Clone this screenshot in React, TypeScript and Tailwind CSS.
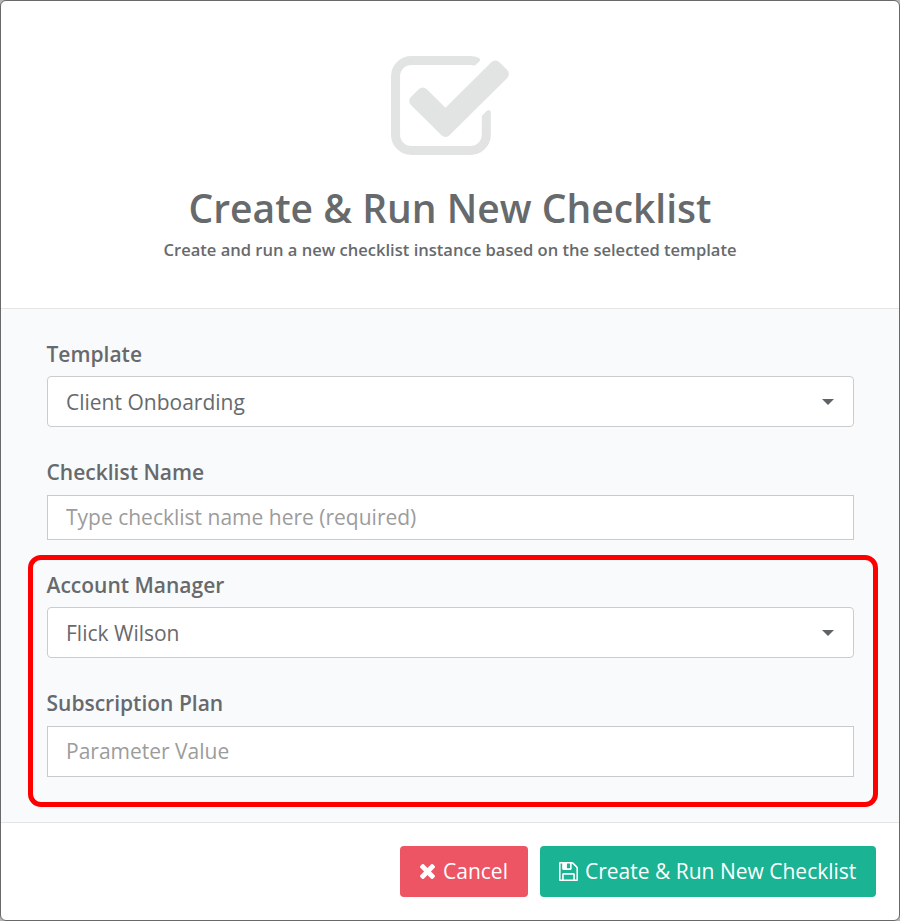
import React from 'react';

interface FieldProps {
  label: string;
  children: React.ReactNode;
}

const Field: React.FC<FieldProps> = ({ label, children }) => (
  <label className="block">
    <span className="-ml-[0.5px] block h-[32px] leading-[30px] mb-[5px] font-semibold text-[#676a6c]">{label}</span>
    {children}
  </label>
);

// Closed dropdown showing the current value
const SelectBox = ({ value }: { value: string }) => (
  <button
    type="button"
    className="flex w-full h-[51px] items-center justify-between rounded-[4px] border border-[#cccccc] bg-white pl-[18px] pr-[19px] text-left text-[#676a6c]"
  >
    <span>{value}</span>
    <svg width="12" height="6" viewBox="0 0 12 6" fill="#606366">
      <path d="M0 0h12L6 6z" />
    </svg>
  </button>
);

const CheckSquareIcon = () => (
  <svg width="118" height="99" viewBox="64 128 1664 1408" preserveAspectRatio="none" fill="#e2e4e3">
    <path d="M1472 930v318q0 119-84.5 203.5t-203.5 84.5h-832q-119 0-203.5-84.5t-84.5-203.5v-832q0-119 84.5-203.5t203.5-84.5h832q63 0 117 25 15 7 18 23 3 17-9 29l-49 49q-10 10-23 10-3 0-9-2-23-6-45-6h-832q-66 0-113 47t-47 113v832q0 66 47 113t113 47h832q66 0 113-47t47-113v-254q0-13 9-22l64-64q10-10 23-10 6 0 12 3 20 8 20 29zm231-489l-814 814q-24 24-57 24t-57-24l-430-430q-24-24-24-57t24-57l110-110q24-24 57-24t57 24l263 263 647-647q24-24 57-24t57 24l110 110q24 24 24 57t-24 57z" />
  </svg>
);

const TimesIcon = () => (
  <svg width="15" height="15" viewBox="302 366 1188 1188" fill="currentColor">
    <path d="M1490 1322q0 40-28 68l-136 136q-28 28-68 28t-68-28l-294-294-294 294q-28 28-68 28t-68-28l-136-136q-28-28-28-68t28-68l294-294-294-294q-28-28-28-68t28-68l136-136q28-28 68-28t68 28l294 294 294-294q28-28 68-28t68 28l136 136q28 28 28 68t-28 68l-294 294 294 294q28 28 28 68z" />
  </svg>
);

const SaveIcon = () => (
  <svg width="19" height="19" viewBox="128 128 1536 1536" fill="currentColor">
    <path d="M512 1536h768v-384h-768v384zm896 0h128v-896q0-14-10-38.5t-20-34.5l-281-281q-10-10-34-20t-39-10v416q0 40-28 68t-68 28h-576q-40 0-68-28t-28-68v-416h-128v1280h128v-416q0-40 28-68t68-28h832q40 0 68 28t28 68v416zm-384-928v-320q0-13-9.5-22.5t-22.5-9.5h-192q-13 0-22.5 9.5t-9.5 22.5v320q0 13 9.5 22.5t22.5 9.5h192q13 0 22.5-9.5t9.5-22.5zm640 32v928q0 40-28 68t-68 28h-1344q-40 0-68-28t-28-68v-1344q0-40 28-68t68-28h928q40 0 88 20t76 48l280 280q28 28 48 76t20 88z" />
  </svg>
);

const inputClass =
  'block w-full border border-[#c8cacc] bg-white px-[18px] pb-[2px] text-[#676a6c] placeholder:text-[#9c9c9c] outline-none';

const App: React.FC = () => {
  return (
    <div className="h-[921px] w-[900px] bg-[#b5b5b5] font-['Open_Sans',sans-serif] text-[21px] leading-[30px]">
      <div className="flex h-full flex-col overflow-hidden rounded-[6px] border border-[#69696b] bg-white">
        <header className="flex h-[308px] shrink-0 flex-col items-center border-b border-[#e5e5e5] pt-[55px] text-[#676a6c]">
          <CheckSquareIcon />
          <h4 className="mt-[30px] text-[39px] leading-[46px] font-semibold">Create &amp; Run New Checklist</h4>
          <small className="mt-[7px] text-[16.56px] leading-[24px] font-semibold">
            Create and run a new checklist instance based on the selected template
          </small>
        </header>

        <main className="h-[514px] shrink-0 border-b border-[#e5e5e5] bg-[#f9fafc] pr-[45px] pl-[46px] pt-[30px]">
          <Field label="Template">
            <SelectBox value="Client Onboarding" />
          </Field>
          <div className="mt-[30px]">
            <Field label="Checklist Name">
              <input className={`${inputClass} mt-[6px] h-[45px]`} placeholder="Type checklist name here (required)" />
            </Field>
          </div>

          {/* Template parameters */}
          <div className="relative mt-[30px]">
            <div className="pointer-events-none absolute -top-[15px] -left-[19px] h-[252px] w-[850px] rounded-[13px] border-[5px] border-[#ff0000]" />
            <Field label="Account Manager">
              <SelectBox value="Flick Wilson" />
            </Field>
            <div className="mt-[30px]">
              <Field label="Subscription Plan">
                <input className={`${inputClass} mt-[6px] h-[51px]`} placeholder="Parameter Value" />
              </Field>
            </div>
          </div>
        </main>

        <footer className="flex justify-end gap-[12px] pt-[23px] pr-[23px] text-white">
          <button type="button" className="flex h-[51px] w-[128px] items-center rounded-[4px] bg-[#ed5565] pl-[20px]">
            <TimesIcon />
            <span className="ml-[8px] pb-[2px]">Cancel</span>
          </button>
          <button type="button" className="flex h-[51px] w-[336px] items-center rounded-[4px] bg-[#1ab394] pl-[19px] whitespace-nowrap">
            <SaveIcon />
            <span className="ml-[7px] pb-[2px]">Create &amp; Run New Checklist</span>
          </button>
        </footer>
      </div>
    </div>
  );
};

export default App;
